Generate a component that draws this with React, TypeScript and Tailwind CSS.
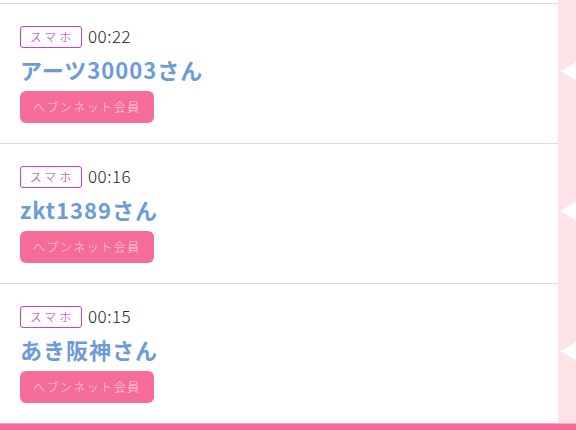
const rows = [
  { time: "00:22", name: "アーツ30003さん" },
  { time: "00:16", name: "zkt1389さん" },
  { time: "00:15", name: "あき阪神さん" },
];

export default function App() {
  return (
    <div
      className="w-[576px] h-[430px] overflow-hidden flex flex-col bg-white"
      style={{ fontFamily: '"Noto Sans CJK JP", "Noto Sans", sans-serif' }}
    >
      <div className="flex flex-1">
        <div className="w-[558px] pt-[3px]">
          {rows.map((r) => (
            <div key={r.time} className="h-[140px] border-t border-[#dcdcdc] pl-[20px] pt-[21px]">
              <div className="flex items-center gap-[6px]">
                <span className="h-[22px] w-[62px] flex items-center justify-center border border-[#c83fd6] rounded-[3px] text-[12px] font-light text-[#b52fc6] tracking-[3px] pl-[2px]">
                  スマホ
                </span>
                <span className="text-[17px] font-light text-[#222] leading-[22px] pb-[2px] tracking-[0.5px]">{r.time}</span>
              </div>
              <div className="mt-[7px] text-[22px] font-bold leading-[26px] text-[#6d9bd9] tracking-[1px]">
                {r.name}
              </div>
              <div className="mt-[9px] w-[134px] h-[32px] rounded-[6px] bg-[#f66c98] flex items-center justify-center text-[12px] font-light text-[#ffd9e5] tracking-[1.5px]">
                ヘブンネット会員
              </div>
            </div>
          ))}
        </div>
        <div className="w-[18px] bg-[#fde2e8] relative">
          {[62, 202, 342].map((t) => (
            <svg key={t} className="absolute left-[2px]" style={{ top: t }} width="16" height="18" viewBox="0 0 16 18">
              <path d="M0 9 L16 0 L16 18 Z" fill="#fff" />
            </svg>
          ))}
        </div>
      </div>
      <div className="h-[1px] bg-[#f7a9c2]" />
      <div className="h-[8px] bg-[#f46a97]" />
    </div>
  );
}
